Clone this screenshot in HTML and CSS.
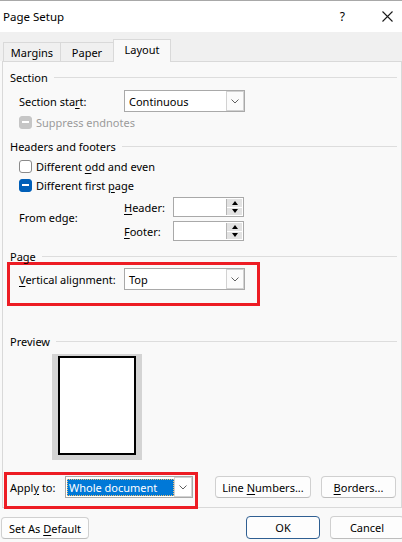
FILE: index.html
```html
<!DOCTYPE html>
<html>
<head>
<meta charset="utf-8">
<title>Page Setup</title>
<link rel="stylesheet" href="styles.css">
</head>
<body>
<div class="titlebar">
  <span class="title">Page Setup</span>
  <span class="help">?</span>
  <svg class="close" width="11" height="11" viewBox="0 0 11 11"><path d="M0.5 0.5L10.5 10.5M10.5 0.5L0.5 10.5" stroke="#1a1a1a" stroke-width="1.1" fill="none"/></svg>
</div>
<div class="tabs">
  <div class="tab tab-margins">Margins</div>
  <div class="tab tab-paper">Paper</div>
  <div class="tab tab-layout">Layout</div>
</div>
<div class="panel">
  <div class="gtitle">Section</div>
  <div class="row row-sel">
    <span class="lbl">Section sta<u>r</u>t:</span>
    <div class="select"><span class="val">Continuous</span><span class="dd"><svg width="8" height="5" viewBox="0 0 8 5"><polyline points="0.5,0.5 4,4 7.5,0.5" fill="none" stroke="#606060" stroke-width="1"/></svg></span></div>
  </div>
  <div class="row row-cb row-sup">
    <span class="cb dis"><span class="dash"></span></span><span class="dis-text">Suppress endnotes</span>
  </div>

  <div class="gtitle gt-hf">Headers and footers</div>
  <div class="row row-cb row-cb1">
    <span class="cb"></span><span>Different <u>o</u>dd and even</span>
  </div>
  <div class="row row-cb row-cb2">
    <span class="cb on"><span class="dash"></span></span><span>Different first <u>p</u>age</span>
  </div>
  <div class="edge">
    <span class="lbl edge-lbl">From edge:</span>
    <div class="spins">
      <div class="spinrow">
        <span class="spinlbl"><u>H</u>eader:</span>
        <div class="spin"><div class="spinbtns"><span class="spinbtn"><span class="tri-up"></span></span><span class="spinbtn"><span class="tri-down"></span></span></div></div>
      </div>
      <div class="spinrow">
        <span class="spinlbl"><u>F</u>ooter:</span>
        <div class="spin"><div class="spinbtns"><span class="spinbtn"><span class="tri-up"></span></span><span class="spinbtn"><span class="tri-down"></span></span></div></div>
      </div>
    </div>
  </div>

  <div class="gtitle gt-page">Page</div>
  <div class="hl hl-va">
    <div class="row-in">
      <span class="lbl"><u>V</u>ertical alignment:</span>
      <div class="select"><span class="val">Top</span><span class="dd"><svg width="8" height="5" viewBox="0 0 8 5"><polyline points="0.5,0.5 4,4 7.5,0.5" fill="none" stroke="#606060" stroke-width="1"/></svg></span></div>
    </div>
  </div>

  <div class="gtitle gt-prev">Preview</div>
  <div class="preview"><div class="page"></div></div>

  <div class="bottom">
    <div class="hl hl-apply">
      <span class="apply-lbl"><span>Appl<u>y</u> to:</span></span>
      <div class="select sel-apply"><span class="val"><span class="selhl">Whole document</span></span><span class="dd dd-white"><svg width="8" height="5" viewBox="0 0 8 5"><polyline points="0.5,0.5 4,4 7.5,0.5" fill="none" stroke="#606060" stroke-width="1"/></svg></span></div>
    </div>
    <div class="btn btn-line"><span>Line <u>N</u>umbers...</span></div>
    <div class="btn btn-borders"><span><u>B</u>orders...</span></div>
  </div>
</div>
<div class="footer">
  <div class="btn btn-default"><span>Set As <u>D</u>efault</span></div>
  <div class="btn btn-ok"><span>OK</span></div>
  <div class="btn btn-cancel"><span>Cancel</span></div>
</div>
</body>
</html>
```

FILE: styles.css
```css
* { box-sizing: border-box; }
html, body { margin: 0; padding: 0; }
body {
  width: 402px;
  height: 542px;
  overflow: hidden;
  background: #f9f9f9;
  font-family: "Noto Sans", "Open Sans", sans-serif;
  font-size: 11px;
  color: #000;
  white-space: nowrap;
}
u { text-decoration-thickness: 1px; text-underline-offset: 2px; }

.titlebar {
  height: 32px;
  background: #fff;
  border-top: 1px solid #a8a8a8;
  display: flex;
  align-items: center;
  padding-left: 3px;
}
.title { font-size: 11.5px; }
.help { margin-left: auto; margin-right: 37px; font-size: 12px; }
.close { margin-right: 9px; }

.tabs {
  height: 29px;
  background: #f0f0f0;
  display: flex;
  align-items: flex-end;
  padding-left: 3px;
}
.tab {
  height: 19px;
  border: 1px solid #d9d9d9;
  border-bottom: none;
  display: flex;
  align-items: center;
  justify-content: center;
  background: #f0f0f0;
}
.tab + .tab { margin-left: -1px; }
.tab-margins { width: 58px; }
.tab-paper { width: 54px; }
.tab-layout {
  width: 58px;
  height: 23px;
  margin-bottom: -1px;
  padding-bottom: 3px;
  background: #f9f9f9;
  position: relative;
  z-index: 1;
}

.panel {
  height: 447px;
  margin-left: 2px;
  border: 1px solid #d9d9d9;
  padding: 0 4px 0 7px;
  background: #f9f9f9;
}

.gtitle {
  display: flex;
  align-items: center;
  height: 16px;
  gap: 6px;
  margin-top: 7px;
}
.gtitle::after {
  content: "";
  flex: 1;
  height: 1px;
  background: #dddddd;
}
.gt-hf { margin-top: 8px; }
.gt-page { margin-top: 7px; }
.gt-prev { margin-top: 27px; }

.row { display: flex; align-items: center; padding-left: 9px; }
.row-sel { margin-top: 5px; }
.lbl { width: 105px; }

.select {
  width: 121px;
  height: 22px;
  border: 1px solid #a9a9a9;
  background: #fff;
  display: flex;
  align-items: stretch;
}
.select .val { flex: 1; padding-left: 4px; display: flex; align-items: center; }
.dd {
  width: 18px;
  border: 1px solid #d2d2d2;
  background: #fbfbfb;
  display: flex;
  align-items: center;
  justify-content: center;
}

.row-cb { height: 16px; }
.row-sup { margin-top: 2px; }
.row-cb1 { margin-top: 4px; }
.row-cb2 { margin-top: 3px; }
.cb {
  width: 13px;
  height: 13px;
  border: 1px solid #8a8a8a;
  border-radius: 3px;
  background: #fff;
  margin-right: 4px;
  display: flex;
  align-items: center;
  justify-content: center;
}
.cb.dis { background: #c6c6c6; border-color: #c6c6c6; }
.cb.on { background: #005fb8; border-color: #005fb8; }
.dash { width: 7px; height: 1.5px; background: #fff; }
.dis-text { color: #9b9b9b; }

.edge { display: flex; align-items: center; padding-left: 9px; margin-top: 4px; }
.edge-lbl { padding-bottom: 3px; }
.spins { display: flex; flex-direction: column; gap: 4px; }
.spinrow { display: flex; align-items: center; }
.spinlbl { width: 49px; }
.spin {
  width: 71px;
  height: 20px;
  border: 1px solid #a9a9a9;
  background: #fff;
  display: flex;
  justify-content: flex-end;
  padding: 1px 1px 1px 0;
}
.spinbtns {
  width: 16px;
  border-left: 1px solid #b5b5b5;
  display: flex;
  flex-direction: column;
  gap: 1px;
}
.spinbtn {
  flex: 1;
  background: #e2e2e2;
  display: flex;
  align-items: center;
  justify-content: center;
}
.tri-up {
  width: 0; height: 0;
  border-left: 3.5px solid transparent;
  border-right: 3.5px solid transparent;
  border-bottom: 4px solid #000;
}
.tri-down {
  width: 0; height: 0;
  border-left: 3.5px solid transparent;
  border-right: 3.5px solid transparent;
  border-top: 4px solid #000;
}

.hl { border: 3px solid #ed1c24; }
.hl-va {
  margin-left: -3px;
  margin-top: -2px;
  width: 253px;
  height: 44px;
  padding: 3px 0 0 9px;
}
.row-in { display: flex; align-items: center; }

.preview {
  margin: 5px 0 0 42px;
  width: 90px;
  height: 106px;
  background: #d4d4d4;
  padding: 2px 6px 5px;
}
.page { height: 99px; background: #fff; border: 2px solid #000; }

.bottom { display: flex; align-items: flex-start; margin-top: 12px; }
.hl-apply {
  margin-left: -6px;
  width: 194px;
  height: 37px;
  padding: 1px 2px 0 3px;
  display: flex;
  align-items: flex-start;
}
.apply-lbl { width: 55px; height: 22px; display: flex; align-items: center; }
.sel-apply { width: 128px; }
.sel-apply .val { padding-left: 1px; }
.selhl {
  width: 107px;
  height: 17px;
  background: #0078d7;
  color: #fff;
  border: 1px dotted #f0c070;
  padding-left: 1px;
  display: flex;
  align-items: center;
}
.dd-white { background: #fff; }

.btn {
  height: 22px;
  border: 1px solid #d0d0d0;
  border-bottom-color: #bdbdbd;
  border-radius: 4px;
  background: #fdfdfd;
  display: flex;
  align-items: center;
  justify-content: center;
}
.btn-line { width: 96px; margin: 4px 0 0 17px; }
.btn-borders { width: 75px; margin: 4px 0 0 10px; }

.footer { display: flex; padding-top: 9px; }
.btn-default { width: 88px; margin-left: 1px; }
.btn-ok {
  width: 74px;
  height: 23px;
  margin-left: auto;
  margin-top: -1px;
  border: 1px solid #2f5f92;
}
.btn-cancel { width: 74px; height: 23px; margin-top: -1px; margin-left: 10px; margin-right: -2px; }
```
